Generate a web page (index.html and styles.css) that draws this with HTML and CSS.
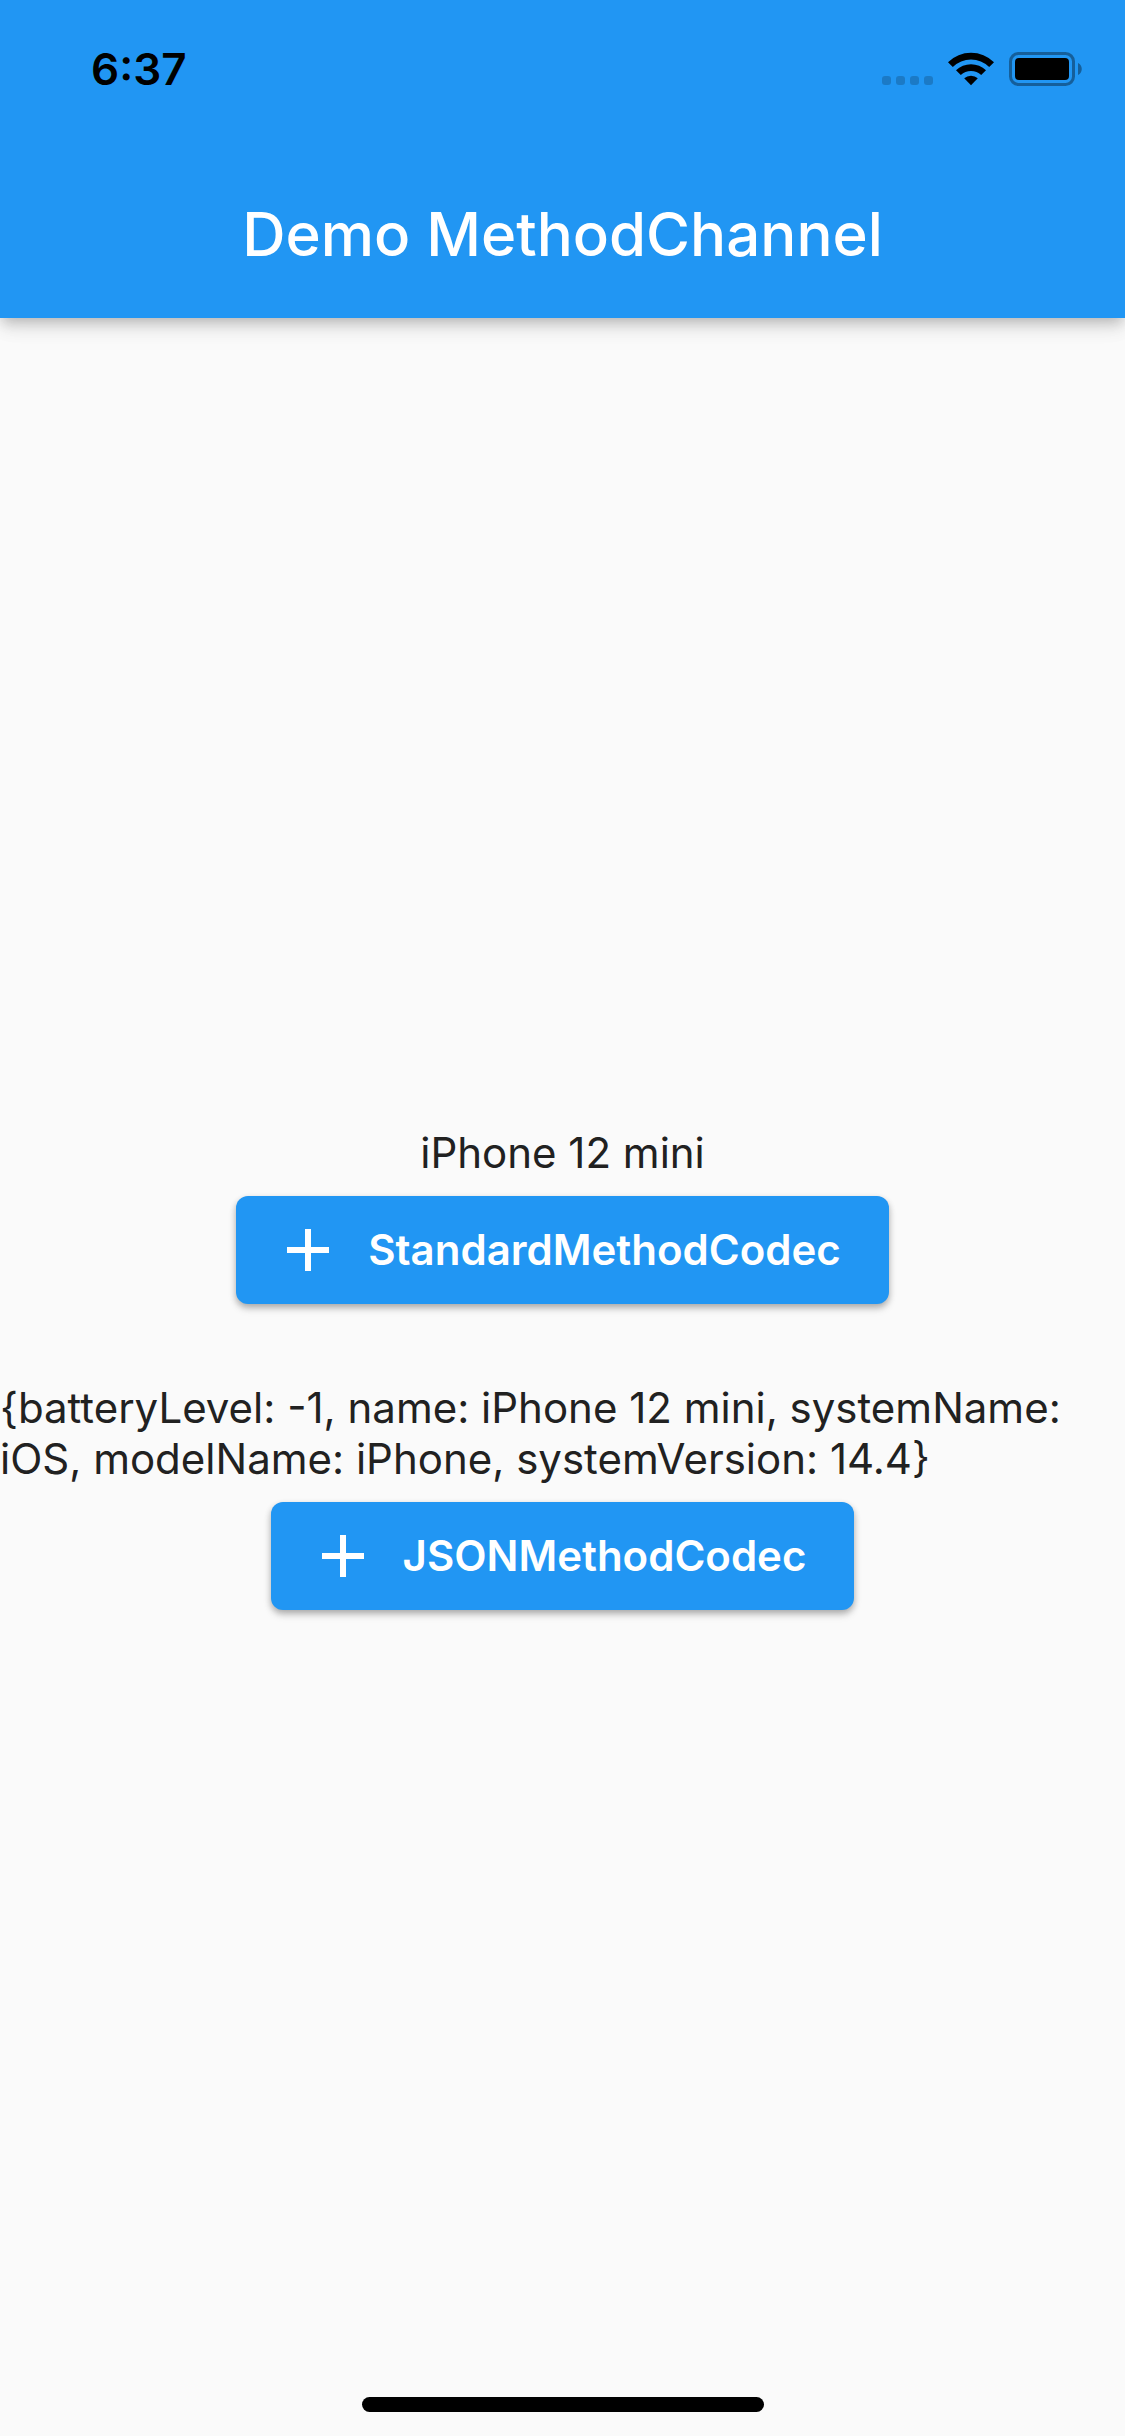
FILE: index.html
```html
<!DOCTYPE html>
<html lang="en">
<head>
<meta charset="utf-8">
<meta name="viewport" content="width=device-width, initial-scale=1">
<title>Demo MethodChannel</title>
<link rel="stylesheet" href="styles.css">
</head>
<body>
<div class="screen">
  <header class="app-bar">
    <div class="status-bar">
      <time class="clock">6:37</time>
      <div class="indicators">
        <svg class="signal" width="51" height="34" viewBox="0 0 51 34" aria-hidden="true">
          <rect x="0" y="24" width="9" height="9" rx="3"/>
          <rect x="14" y="24" width="9" height="9" rx="3"/>
          <rect x="28" y="24" width="9" height="9" rx="3"/>
          <rect x="42" y="24" width="9" height="9" rx="3"/>
        </svg>
        <svg class="wifi" width="46" height="34" viewBox="0 0 46 34" aria-hidden="true">
          <path d="M0 10.2A33 33 0 0 1 46 10.2L41.2 15A26 26 0 0 0 4.800 15Z"/>
          <path d="M8 18.300A21.500 21.500 0 0 1 38 18.300L33.200 23A14.700 14.700 0 0 0 12.800 23Z"/>
          <path d="M16.200 26.300A10 10 0 0 1 29.800 26.300L23 33.200Z"/>
        </svg>
        <svg class="battery" width="74" height="34" viewBox="0 0 74 34" aria-hidden="true">
          <rect class="battery-shell" x="1.500" y="1.500" width="63" height="31" rx="8"/>
          <rect x="6" y="6" width="54" height="22" rx="4"/>
          <path class="battery-tip" d="M69 11C74 13 74 21 69 23Z"/>
        </svg>
      </div>
    </div>
    <h1 class="title">Demo MethodChannel</h1>
  </header>
  <main class="content">
    <section class="codec">
      <p class="result">iPhone 12 mini</p>
      <button class="action" type="button">
        <svg class="plus" viewBox="0 0 24 24" aria-hidden="true"><path d="M19 13h-6v6h-2v-6H5v-2h6V5h2v6h6z"/></svg>
        <span>StandardMethodCodec</span>
      </button>
    </section>
    <section class="codec">
      <p class="result">{batteryLevel: -1, name: iPhone 12 mini, systemName: iOS, modelName: iPhone, systemVersion: 14.4}</p>
      <button class="action" type="button">
        <svg class="plus" viewBox="0 0 24 24" aria-hidden="true"><path d="M19 13h-6v6h-2v-6H5v-2h6V5h2v6h6z"/></svg>
        <span>JSONMethodCodec</span>
      </button>
    </section>
  </main>
  <div class="home-indicator"></div>
</div>
</body>
</html>
```
FILE: styles.css
```css
* {
  box-sizing: border-box;
}

body {
  margin: 0;
  background: #fafafa;
  color: #212121;
  font-family: Inter, "Liberation Sans", sans-serif;
  font-size: 42px;
  line-height: 51px;
}

.screen {
  position: relative;
  display: flex;
  flex-direction: column;
  min-height: 100vh;
}

.app-bar {
  background: #2196f3;
  box-shadow: 0 6px 12px -3px rgba(0, 0, 0, 0.2), 0 12px 15px rgba(0, 0, 0, 0.07), 0 3px 30px rgba(0, 0, 0, 0.06);
}

.status-bar {
  display: flex;
  align-items: center;
  justify-content: space-between;
  height: 138px;
  padding: 0 42px 0 91px;
  color: #000;
}

.clock {
  font-size: 44px;
  font-weight: 600;
}

.indicators {
  display: flex;
  gap: 15px;
}

.signal {
  fill: #1b7ac6;
}

.battery-shell {
  fill: none;
  stroke: #155f9b;
  stroke-width: 3;
}

.battery-tip {
  fill: #155f9b;
}

.title {
  margin: 0;
  padding: 60px 48px 48px;
  color: #fff;
  font-size: 60px;
  font-weight: 500;
  line-height: 72px;
  text-align: center;
}

.content {
  display: flex;
  flex: 1;
  flex-direction: column;
  justify-content: center;
  gap: 60px;
}

.codec {
  display: flex;
  flex-direction: column;
  align-items: center;
}

.result {
  margin: 0;
}

.action {
  display: flex;
  align-items: center;
  gap: 24px;
  height: 108px;
  margin: 18px 0;
  padding: 0 48px 0 36px;
  border: 0;
  border-radius: 12px;
  background: #2196f3;
  box-shadow: 0 3px 6px rgba(0, 0, 0, 0.24), 0 5px 9px rgba(0, 0, 0, 0.12);
  color: #fff;
  font: inherit;
  font-weight: 600;
}

.plus {
  width: 72px;
  height: 72px;
  fill: currentColor;
}

.home-indicator {
  position: absolute;
  bottom: 24px;
  left: 50%;
  width: 402px;
  height: 15px;
  margin-left: -201px;
  border-radius: 8px;
  background: #000;
}
```
